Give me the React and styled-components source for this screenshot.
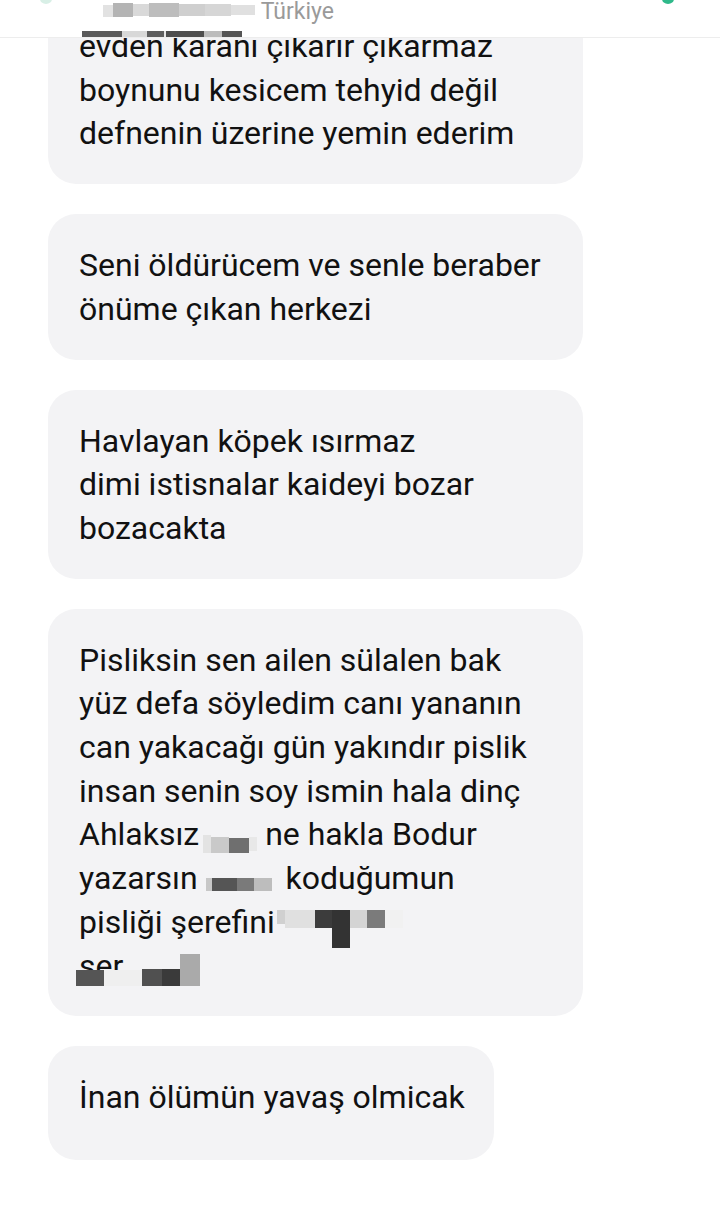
import React from "react";
import styled, { createGlobalStyle } from "styled-components";

const Global = createGlobalStyle`
  html, body {
    margin: 0;
    padding: 0;
    background: #ffffff;
  }
  body {
    font-family: Roboto, "Noto Sans", "Liberation Sans", sans-serif;
    width: 720px;
    height: 1220px;
    overflow: hidden;
  }
`;

const Screen = styled.div`
  position: relative;
  width: 720px;
  height: 1220px;
  overflow: hidden;
  background: #ffffff;
`;

const Header = styled.div`
  position: absolute;
  top: 0;
  left: 0;
  right: 0;
  height: 37px;
  background: #ffffff;
  border-bottom: 1px solid #ededed;
  z-index: 2;
`;

const HeaderLine = styled.div`
  padding-left: 103px;
  margin-top: -3px;
  height: 30px;
  line-height: 30px;
  white-space: nowrap;
  font-size: 23px;
  color: #9a9a9a;
`;

const HeaderStrip = styled.div`
  position: absolute;
  left: 82px;
  bottom: 0;
  display: flex;
`;

const Dot = styled.span`
  position: absolute;
  top: -6px;
  left: ${(p) => p.x}px;
  width: 12px;
  height: 10px;
  border-radius: 50%;
  background: ${(p) => p.c};
`;

const Feed = styled.div`
  display: flex;
  flex-direction: column;
  align-items: flex-start;
  gap: 30px;
  padding: 0 0 0 48px;
  margin-top: -5px;
`;

const Bubble = styled.div`
  box-sizing: border-box;
  width: ${(p) => (p.wide ? "535px" : "fit-content")};
  min-height: ${(p) => p.minH || 0}px;
  padding: 30px 29px 28px 31px;
  background: #f3f3f5;
  border-radius: 28px;
  font-size: 32px;
  line-height: 43.7px;
  color: #111111;
  white-space: pre-line;
`;

/* redaction pixels: the box takes no room in the line, its top sits
   `top` px above the text baseline */
const Redact = styled.span`
  display: inline-block;
  overflow: hidden;
  white-space: nowrap;
  font-size: 0;
  line-height: 0;
  height: ${(p) => p.h}px;
  margin: 0 ${(p) => p.mr || 0}px ${(p) => -p.h}px ${(p) => p.ml || 0}px;
  vertical-align: ${(p) => p.top}px;
`;

const Cell = styled.span`
  display: inline-block;
  vertical-align: top;
  width: ${(p) => p.w}px;
  height: ${(p) => p.h}px;
  margin-top: ${(p) => p.t || 0}px;
  background: ${(p) => p.c};
`;

const Blocks = ({ cells, ...rest }) => (
  <Redact {...rest}>
    {cells.map(([w, h, c, t], i) => (
      <Cell key={i} w={w} h={h} c={c} t={t} />
    ))}
  </Redact>
);

export default function App() {
  return (
    <Screen>
      <Global />
      <Header>
        <Dot x={40} c="#d8efe6" />
        <Dot x={662} c="#2fb98a" />
        <HeaderLine>
          <Blocks
            h={18}
            top={18}
            cells={[
              [10, 12, "#e2e2e2", 4],
              [20, 14, "#b4b4b4", 2],
              [16, 12, "#d9d9d9", 3],
              [30, 14, "#bdbdbd", 2],
              [26, 12, "#cfcfcf", 3],
              [26, 12, "#d6d6d6", 3],
              [24, 10, "#e0e0e0", 4],
            ]}
          />
          {"\u00a0Türkiye"}
        </HeaderLine>
        <HeaderStrip>
          <Cell w={40} h={6} c="#5a5a5a" />
          <Cell w={25} h={6} c="#d8d8d8" />
          <Cell w={17} h={6} c="#5e5e5e" />
          <Cell w={2} h={6} c="#e6e6e6" />
          <Cell w={38} h={6} c="#4e4e4e" />
          <Cell w={18} h={6} c="#bcbcbc" />
          <Cell w={20} h={6} c="#555555" />
        </HeaderStrip>
      </Header>

      <Feed>
        <Bubble wide>
          {"evden karanı çıkarır çıkarmaz\n"}
          {"boynunu kesicem tehyid değil\n"}
          {"defnenin üzerine yemin ederim"}
        </Bubble>

        <Bubble wide>
          {"Seni öldürücem ve senle beraber\n"}
          {"önüme çıkan herkezi"}
        </Bubble>

        <Bubble wide>
          {"Havlayan köpek ısırmaz\n"}
          {"dimi istisnalar kaideyi bozar\n"}
          {"bozacakta"}
        </Bubble>

        <Bubble wide>
          {"Pisliksin sen ailen sülalen bak\n"}
          {"yüz defa söyledim canı yananın\n"}
          {"can yakacağı gün yakındır pislik\n"}
          {"insan senin soy ismin hala dinç\n"}
          Ahlaksız
          <Blocks
            h={20}
            top={12}
            ml={4}
            cells={[
              [8, 18, "#e3e3e3", 2],
              [18, 16, "#c9c9c9", 4],
              [20, 16, "#6f6f6f", 5],
              [8, 14, "#e8e8e8", 4],
            ]}
          />
          {" ne hakla Bodur\n"}
          yazarsın
          <Blocks
            h={14}
            top={11}
            ml={8}
            mr={14}
            cells={[
              [6, 13, "#c7c7c7"],
              [25, 13, "#555555"],
              [17, 13, "#7a7a7a"],
              [18, 13, "#bdbdbd"],
            ]}
          />
          {"koduğumun\n"}
          pisliği şerefini
          <Blocks
            h={38}
            top={23}
            ml={2}
            cells={[
              [8, 14, "#d0d0d0", 0],
              [30, 18, "#e0e0e0", 0],
              [17, 18, "#3c3c3c", 0],
              [18, 38, "#333333", 0],
              [17, 18, "#d4d4d4", 0],
              [18, 18, "#7b7b7b", 0],
              [18, 18, "#f1f1f1", 0],
            ]}
          />
          {"\n"}
          şer
          <Blocks
            h={32}
            top={23}
            ml={-47}
            cells={[
              [28, 16, "#555555", 16],
              [38, 16, "#efefef", 16],
              [20, 17, "#505050", 15],
              [18, 17, "#3a3a3a", 15],
              [20, 32, "#aaaaaa", 0],
            ]}
          />
        </Bubble>

        <Bubble minH={114}>{"İnan ölümün yavaş olmicak"}</Bubble>
      </Feed>
    </Screen>
  );
}
